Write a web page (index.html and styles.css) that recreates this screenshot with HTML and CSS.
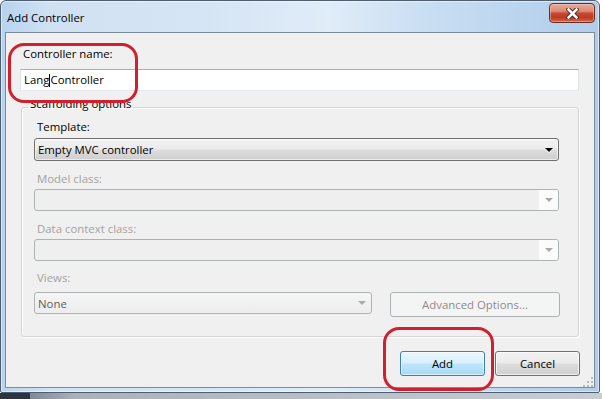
FILE: index.html
```html
<!DOCTYPE html>
<html lang="en">
<head>
  <meta charset="UTF-8" />
  <title>Add Controller</title>
  <link rel="stylesheet" href="styles.css">
</head>
<body>
  <div class="screen">
    <div class="window">
      <div class="titlebar">
        <span class="title">Add Controller</span>
        <div class="close">
          <svg width="13" height="11" viewBox="0 0 13 11">
            <path d="M2.5 1.5 L10.5 9.5 M10.5 1.5 L2.5 9.5" stroke="#4a1c14" stroke-width="4.4" stroke-linecap="square"/>
            <path d="M2.5 1.5 L10.5 9.5 M10.5 1.5 L2.5 9.5" stroke="#fff" stroke-width="2.6" stroke-linecap="square"/>
          </svg>
        </div>
      </div>

      <div class="client">
        <div class="name-label">Controller name:</div>
        <div class="textbox">Lang<span class="caret"></span>Controller</div>

        <fieldset class="group">
          <legend>Scaffolding options</legend>

          <div class="label label-template">Template:</div>
          <div class="combo combo-active">
            <span>Empty MVC controller</span>
            <span class="arrow arrow-dark"></span>
          </div>

          <div class="label disabled">Model class:</div>
          <div class="combo combo-disabled">
            <span></span>
            <span class="arrow-cell"><span class="arrow"></span></span>
          </div>

          <div class="label disabled label-context">Data context class:</div>
          <div class="combo combo-disabled">
            <span></span>
            <span class="arrow-cell"><span class="arrow"></span></span>
          </div>

          <div class="label disabled label-views">Views:</div>
          <div class="views-row">
            <div class="combo combo-none">
              <span>None</span>
              <span class="arrow"></span>
            </div>
            <div class="btn btn-disabled btn-advanced">Advanced Options...</div>
          </div>
        </fieldset>

        <div class="actions">
          <div class="btn btn-default">Add</div>
          <div class="btn">Cancel</div>
        </div>

        <svg class="grip" width="10" height="10" viewBox="0 0 10 10">
          <g fill="#b9b9b9">
            <rect x="8" y="0" width="2" height="2"/>
            <rect x="4" y="4" width="2" height="2"/>
            <rect x="8" y="4" width="2" height="2"/>
            <rect x="0" y="8" width="2" height="2"/>
            <rect x="4" y="8" width="2" height="2"/>
            <rect x="8" y="8" width="2" height="2"/>
          </g>
        </svg>
      </div>
    </div>
    <div class="taskbar"></div>

    <div class="mark mark-name"></div>
    <div class="mark mark-add"></div>
  </div>
</body>
</html>
```

FILE: styles.css
```css
* {
  box-sizing: border-box;
}

body {
  margin: 0;
  background: #ffffff;
  font-family: "Open Sans", "Noto Sans", sans-serif;
  font-size: 11.4px;
  color: #000;
}

.screen {
  position: relative;
  width: 602px;
  height: 399px;
  overflow: hidden;
}

/* window frame */
.window {
  width: 600px;
  height: 393px;
  display: flex;
  flex-direction: column;
  padding: 0 4px 4px;
  border: 1px solid #4f5e6f;
  border-radius: 6px 6px 2px 2px;
  background: linear-gradient(90deg, #b8d3ee 0%, #d0e1f3 8%, #d6e5f4 35%, #e0ecf8 55%, #cbdff3 70%, #bad4ee 88%, #b2cdea 100%);
  box-shadow: inset 0 0 0 1px rgba(255, 255, 255, 0.5);
}

.titlebar {
  height: 31px;
  display: flex;
  justify-content: space-between;
  align-items: flex-start;
}

.title {
  margin: 9px 0 0 2px;
  line-height: 15px;
  color: #000;
}

.close {
  width: 46px;
  height: 20px;
  margin-top: 2px;
  display: flex;
  align-items: center;
  justify-content: center;
  border: 1px solid #6b2c21;
  border-radius: 4px;
  background: linear-gradient(#e9aa9a 0%, #dc8a74 40%, #c8472f 52%, #bf3c24 75%, #d2654c 100%);
  box-shadow: inset 0 0 0 1px rgba(255, 210, 200, 0.45);
}

.close svg {
  display: block;
  margin-top: 1px;
}

/* client area */
.client {
  position: relative;
  flex: 1;
  padding: 13px 14px 0 14px;
  background: #f0f0f0;
  border: 1px solid #7d8c9d;
}

.name-label {
  margin-left: 3px;
  line-height: 15px;
}

.textbox {
  width: 559px;
  height: 22px;
  margin-top: 8px;
  padding: 0 3px;
  line-height: 20px;
  background: #fff;
  border: 1px solid;
  border-color: #abadb3 #dbdfe6 #e3e9ef #e2e3ea;
}

.caret {
  display: inline-block;
  width: 1px;
  height: 13px;
  vertical-align: -3px;
  background: #000;
}

/* group box */
.group {
  width: 558px;
  margin: 5px 0 0 1px;
  padding: 0 0 19px;
  border: 1px solid #d5d5d5;
  border-radius: 3px;
  box-shadow: inset 1px 1px 0 #fff, 1px 1px 0 #fff;
}

.group legend {
  margin-left: 6px;
  padding: 0 2px 7px;
  line-height: 15px;
}

.label {
  margin: 0 0 3px 15px;
  line-height: 15px;
}

.label-template {
  margin-top: 1px;
  margin-bottom: 4px;
}

.label-context {
  margin-top: 1px;
}

.label-views {
  margin-top: -1px;
  margin-bottom: 7px;
}

.disabled {
  color: #a3a3a3;
}

.combo {
  width: 525px;
  height: 22px;
  margin: 0 0 10px 12px;
  display: flex;
  align-items: center;
  justify-content: space-between;
  padding-left: 3px;
  border: 1px solid #adb2b5;
  border-radius: 3px;
  background: #efefef;
}

.combo-active {
  height: 23px;
  border-color: #707070;
  background: linear-gradient(#f2f2f2 0%, #ebebeb 48%, #dddddd 52%, #cfcfcf 100%);
  box-shadow: inset 0 0 0 1px rgba(255, 255, 255, 0.6);
  padding-right: 5px;
}

.combo-disabled {
  background: #efefef;
}

.arrow-cell {
  width: 19px;
  height: 20px;
  display: flex;
  align-items: center;
  justify-content: center;
  background: #fbfbfb;
  border-radius: 0 2px 2px 0;
}

.arrow {
  width: 0;
  height: 0;
  border-left: 4px solid transparent;
  border-right: 4px solid transparent;
  border-top: 4px solid #a9a9a9;
}

.arrow-dark {
  border-top-color: #000;
  filter: drop-shadow(0 1px 0 #fff);
}

.views-row {
  display: flex;
  align-items: flex-start;
}

.combo-none {
  width: 338px;
  margin-bottom: 0;
  padding-right: 5px;
  color: #5c5c5c;
  background: linear-gradient(#f5f5f5, #ededed);
}

/* buttons */
.btn {
  height: 25px;
  width: 85px;
  display: flex;
  align-items: center;
  justify-content: center;
  border: 1px solid #707070;
  border-radius: 3px;
  background: linear-gradient(#f2f2f2 0%, #ebebeb 48%, #dddddd 52%, #cfcfcf 100%);
  box-shadow: inset 0 0 0 1px rgba(255, 255, 255, 0.7);
}

.btn-default {
  border-color: #3c7fb1;
  background: linear-gradient(#eaf6fd 0%, #d9f0fc 48%, #bee6fd 52%, #a7d9f5 100%);
  box-shadow: inset 0 0 0 1px rgba(255, 255, 255, 0.6);
}

.btn-disabled {
  color: #8c8c8c;
  border-color: #adb2b5;
  background: #f4f4f4;
  box-shadow: none;
}

.btn-advanced {
  width: 170px;
  margin-left: 18px;
}

.actions {
  margin-top: 14px;
  display: flex;
  justify-content: flex-end;
  gap: 10px;
}

.grip {
  position: absolute;
  right: 1px;
  bottom: 0;
}

.taskbar {
  height: 6px;
  background: linear-gradient(90deg, #2b3542 0, #2b3542 30px, #7f8a96 30px, #a9b2bb 75px, #c7cdd3 100%);
}

/* red annotation marks */
.mark {
  position: absolute;
  border: 3px solid #d21f2d;
  border-radius: 16px;
}

.mark-name {
  left: 8px;
  top: 43px;
  width: 130px;
  height: 60px;
}

.mark-add {
  left: 383px;
  top: 327px;
  width: 111px;
  height: 64px;
}
```
